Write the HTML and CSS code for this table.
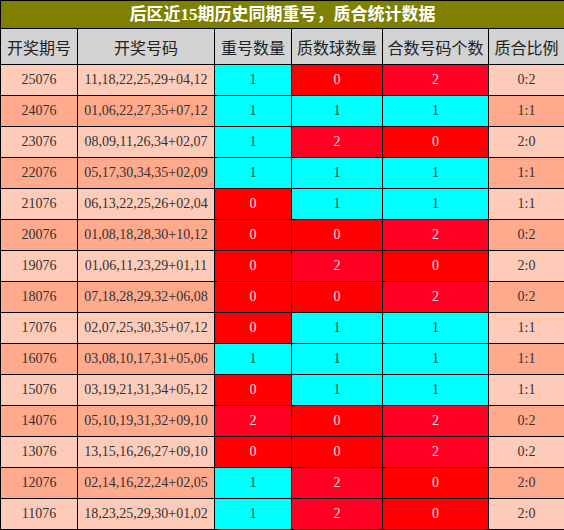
FILE: index.html
```html
<!DOCTYPE html>
<html lang="zh">
<head>
  <meta charset="UTF-8" />
  <title>后区近15期历史同期重号，质合统计数据</title>
  <link rel="stylesheet" href="styles.css">
</head>
<body>
  <table class="stats">
    <colgroup>
      <col class="c-issue">
      <col class="c-nums">
      <col class="c-repeat">
      <col class="c-prime">
      <col class="c-comp">
      <col class="c-ratio">
    </colgroup>
    <tr class="title-row">
      <th colspan="6">后区近15期历史同期重号，质合统计数据</th>
    </tr>
    <tr class="head-row">
      <th>开奖期号</th>
      <th>开奖号码</th>
      <th>重号数量</th>
      <th>质数球数量</th>
      <th>合数号码个数</th>
      <th>质合比例</th>
    </tr>
    <tr class="light">
      <td>25076</td><td>11,18,22,25,29+04,12</td>
      <td class="v1">1</td><td class="v0">0</td><td class="v2">2</td><td>0:2</td>
    </tr>
    <tr class="dark">
      <td>24076</td><td>01,06,22,27,35+07,12</td>
      <td class="v1">1</td><td class="v1">1</td><td class="v1">1</td><td>1:1</td>
    </tr>
    <tr class="light">
      <td>23076</td><td>08,09,11,26,34+02,07</td>
      <td class="v1">1</td><td class="v2">2</td><td class="v0">0</td><td>2:0</td>
    </tr>
    <tr class="dark">
      <td>22076</td><td>05,17,30,34,35+02,09</td>
      <td class="v1">1</td><td class="v1">1</td><td class="v1">1</td><td>1:1</td>
    </tr>
    <tr class="light">
      <td>21076</td><td>06,13,22,25,26+02,04</td>
      <td class="v0">0</td><td class="v1">1</td><td class="v1">1</td><td>1:1</td>
    </tr>
    <tr class="dark">
      <td>20076</td><td>01,08,18,28,30+10,12</td>
      <td class="v0">0</td><td class="v0">0</td><td class="v2">2</td><td>0:2</td>
    </tr>
    <tr class="light">
      <td>19076</td><td>01,06,11,23,29+01,11</td>
      <td class="v0">0</td><td class="v2">2</td><td class="v0">0</td><td>2:0</td>
    </tr>
    <tr class="dark">
      <td>18076</td><td>07,18,28,29,32+06,08</td>
      <td class="v0">0</td><td class="v0">0</td><td class="v2">2</td><td>0:2</td>
    </tr>
    <tr class="light">
      <td>17076</td><td>02,07,25,30,35+07,12</td>
      <td class="v0">0</td><td class="v1">1</td><td class="v1">1</td><td>1:1</td>
    </tr>
    <tr class="dark">
      <td>16076</td><td>03,08,10,17,31+05,06</td>
      <td class="v1">1</td><td class="v1">1</td><td class="v1">1</td><td>1:1</td>
    </tr>
    <tr class="light">
      <td>15076</td><td>03,19,21,31,34+05,12</td>
      <td class="v0">0</td><td class="v1">1</td><td class="v1">1</td><td>1:1</td>
    </tr>
    <tr class="dark">
      <td>14076</td><td>05,10,19,31,32+09,10</td>
      <td class="v2">2</td><td class="v0">0</td><td class="v2">2</td><td>0:2</td>
    </tr>
    <tr class="light">
      <td>13076</td><td>13,15,16,26,27+09,10</td>
      <td class="v0">0</td><td class="v0">0</td><td class="v2">2</td><td>0:2</td>
    </tr>
    <tr class="dark">
      <td>12076</td><td>02,14,16,22,24+02,05</td>
      <td class="v1">1</td><td class="v2">2</td><td class="v0">0</td><td>2:0</td>
    </tr>
    <tr class="light">
      <td>11076</td><td>18,23,25,29,30+01,02</td>
      <td class="v1">1</td><td class="v2">2</td><td class="v0">0</td><td>2:0</td>
    </tr>
  </table>
</body>
</html>
```

FILE: styles.css
```css
body {
  margin: 0;
  padding: 0;
  background: #fff;
  font-family: "Liberation Serif", "Noto Sans CJK SC", serif;
  color: #333;
}
.stats {
  border-collapse: collapse;
  table-layout: fixed;
  width: 564px;
}
.c-issue { width: 77px; }
.c-nums { width: 137px; }
.c-repeat { width: 77px; }
.c-prime { width: 91px; }
.c-comp { width: 106px; }
.c-ratio { width: 76px; }
.stats th,
.stats td {
  border: 1px solid #000;
  padding: 0;
  text-align: center;
  white-space: nowrap;
}
.title-row th {
  height: 27px;
  background: #808000;
  color: #fff;
  font-family: "Liberation Serif", "Noto Sans CJK SC", sans-serif;
  font-size: 17px;
  font-weight: bold;
  line-height: 27px;
}
.head-row th {
  height: 35px;
  background: #d3d3d3;
  color: #222;
  font-family: "Noto Sans CJK SC", sans-serif;
  font-size: 16px;
  font-weight: normal;
}
.stats td {
  height: 30px;
  font-size: 14px;
  line-height: 30px;
}
.light td { background: #ffcbb9; }
.dark td { background: #ffaa8c; }
.stats td.v1 { background: #00ffff; color: #1a3a3a; }
.stats td.v0 { background: #ff0000; color: #ffe0e0; }
.stats td.v2 { background: #ff0022; color: #ffe0e0; }
```
